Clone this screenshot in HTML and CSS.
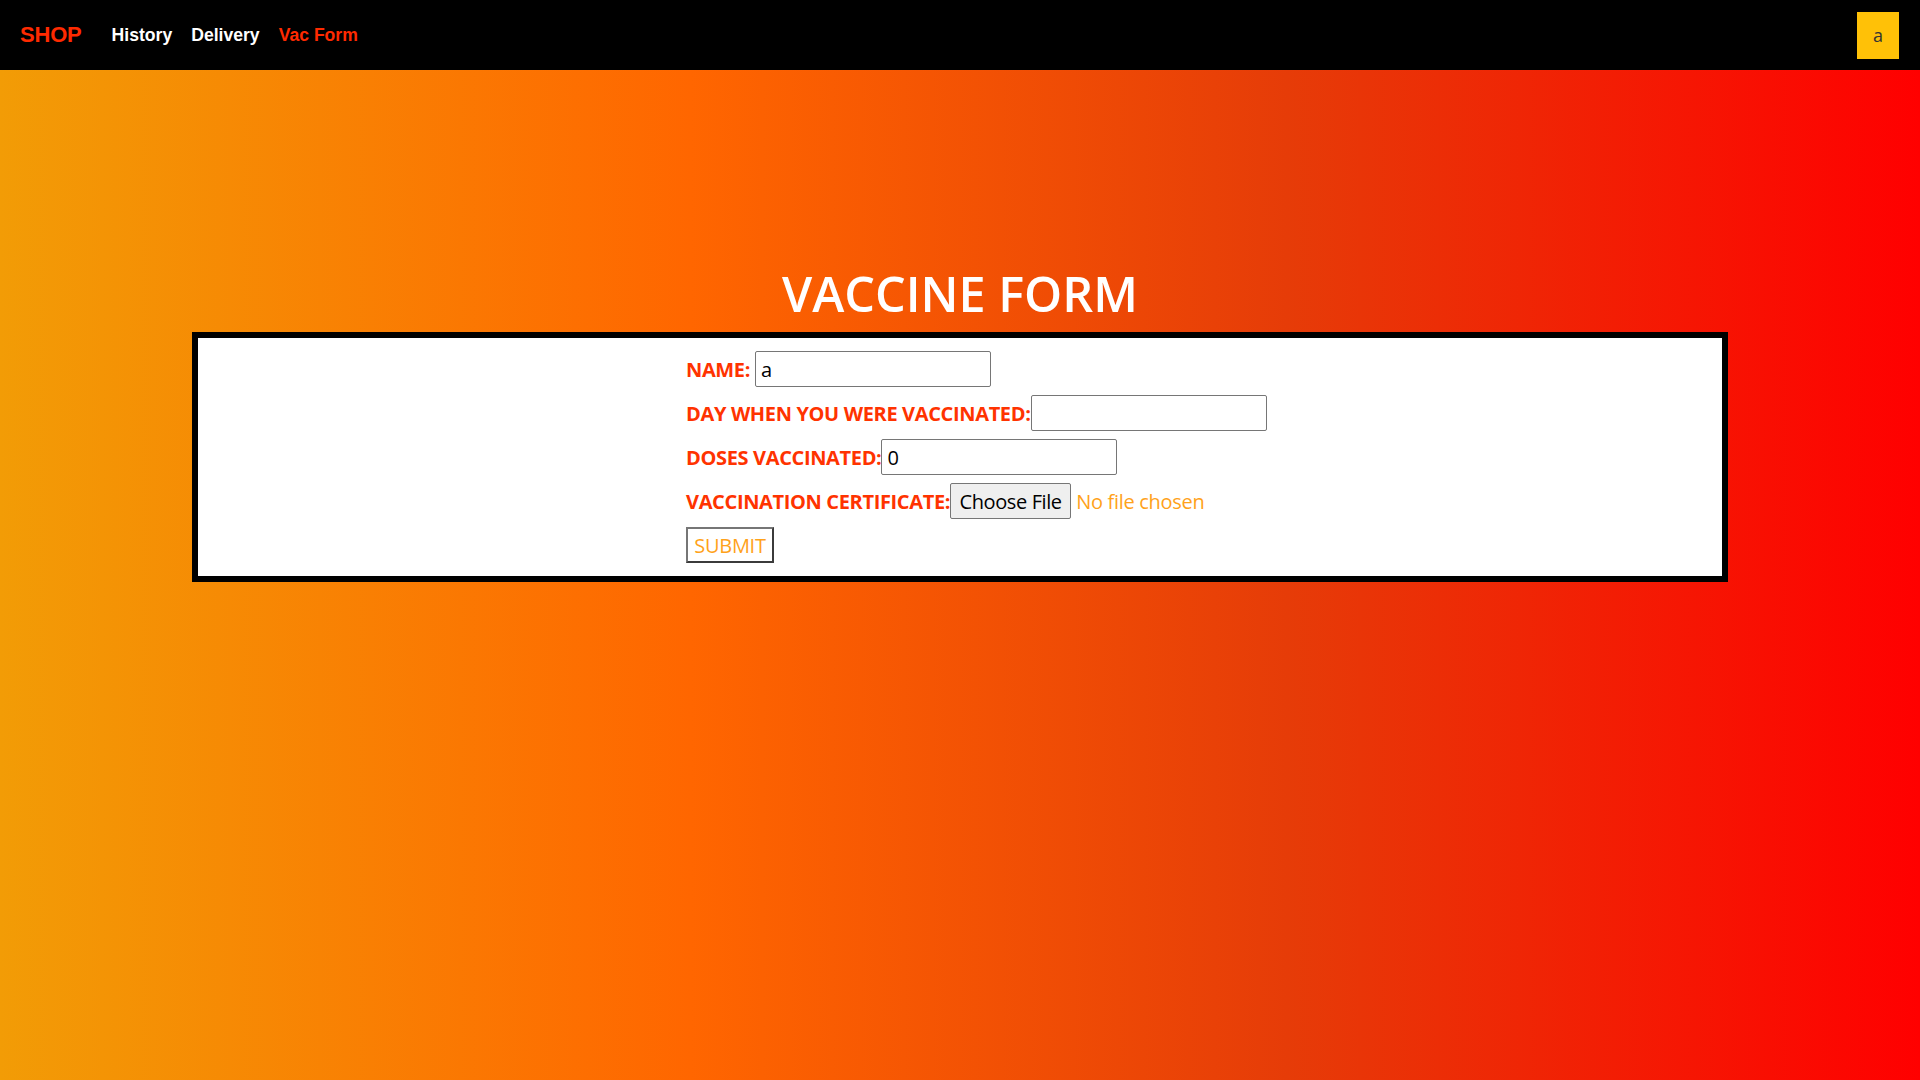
FILE: index.html
```html
<!DOCTYPE html>
<html lang="en">
<head>
<meta charset="utf-8">
<title>Vaccine Form</title>
<link rel="stylesheet" href="styles.css">
</head>
<body>
<nav class="navbar">
  <div class="nav-left">
    <a class="brand" href="#">SHOP</a>
    <div class="nav-links">
      <a class="nav-link" href="#">History</a>
      <a class="nav-link" href="#">Delivery</a>
      <a class="nav-link active" href="#">Vac Form</a>
    </div>
  </div>
  <div class="avatar">a</div>
</nav>
<main class="main">
  <h1 class="title">VACCINE FORM</h1>
  <div class="card">
    <form class="form">
      <div class="row">
        <label class="label label-spaced">NAME:</label>
        <input class="field" type="text" value="a">
      </div>
      <div class="row">
        <label class="label">DAY WHEN YOU WERE VACCINATED:</label>
        <input class="field" type="text" value="">
      </div>
      <div class="row">
        <label class="label">DOSES VACCINATED:</label>
        <input class="field" type="text" value="0">
      </div>
      <div class="row">
        <label class="label">VACCINATION CERTIFICATE:</label>
        <span class="file-btn">Choose File</span>
        <span class="file-name">No file chosen</span>
      </div>
      <div class="row">
        <button class="submit" type="button">SUBMIT</button>
      </div>
    </form>
  </div>
</main>
</body>
</html>
```
FILE: styles.css
```css
* { box-sizing: border-box; }
html, body { margin: 0; padding: 0; }
body {
  min-height: 100vh;
  background: linear-gradient(to right, #f29c06 0%, #ff6600 36%, #e63c08 67%, #ff0000 100%);
  font-family: "Open Sans", "Noto Sans", sans-serif;
}
.navbar {
  height: 70px;
  background: #000;
  display: flex;
  align-items: center;
  justify-content: space-between;
  padding: 0 21px 0 20px;
}
.nav-left {
  display: flex;
  align-items: center;
}
.brand {
  font-family: "Liberation Sans", Arial, sans-serif;
  font-weight: 700;
  font-size: 22px;
  color: #ff2a00;
  text-decoration: none;
  margin-right: 30px;
  letter-spacing: -0.2px;
}
.nav-links {
  display: flex;
  align-items: center;
  gap: 19px;
}
.nav-link {
  font-family: "Liberation Sans", Arial, sans-serif;
  font-weight: 700;
  font-size: 17.6px;
  color: #fff;
  text-decoration: none;
}
.nav-link.active { color: #ff2a00; }
.avatar {
  width: 42px;
  height: 47px;
  background: #ffc107;
  color: #333;
  font-size: 18px;
  display: flex;
  align-items: center;
  justify-content: center;
}
.main {
  padding-top: 199px;
}
.title {
  margin: 0 0 15px;
  text-align: center;
  color: #fff;
  font-weight: 600;
  font-size: 48.5px;
  line-height: 48px;
}
.card {
  width: 1536px;
  margin: 0 auto;
  border: 6px solid #000;
  background: #fff;
  padding: 13px 0;
}
.form {
  width: 548px;
  margin: 0 auto;
  display: flex;
  flex-direction: column;
  gap: 8px;
}
.row {
  display: flex;
  align-items: center;
  height: 36px;
  white-space: nowrap;
}
.label {
  font-weight: 700;
  font-size: 20px;
  color: #ff3300;
  flex: none;
  letter-spacing: -0.35px;
}
.label-spaced { margin-right: 5px; }
.field {
  width: 236px;
  height: 36px;
  border: 1px solid #767676;
  border-radius: 2px;
  padding: 0 5px;
  font-family: "Open Sans", sans-serif;
  font-size: 20px;
  color: #000;
  background: #fff;
  flex: none;
}
.file-btn {
  width: 121px;
  height: 36px;
  border: 1px solid #767676;
  border-radius: 2px;
  background: #efefef;
  color: #000;
  font-size: 20px;
  display: flex;
  align-items: center;
  justify-content: center;
  flex: none;
  letter-spacing: -0.4px;
}
.file-name {
  margin-left: 5px;
  font-size: 20px;
  color: #ffa21a;
  letter-spacing: -0.3px;
}
.submit {
  width: 88px;
  height: 36px;
  background: #fff;
  border: 2px solid;
  border-color: #767676 #3b3b3b #3b3b3b #767676;
  color: #ffa21a;
  font-family: "Open Sans", sans-serif;
  font-size: 20px;
  padding: 0;
  letter-spacing: -0.3px;
}
```
